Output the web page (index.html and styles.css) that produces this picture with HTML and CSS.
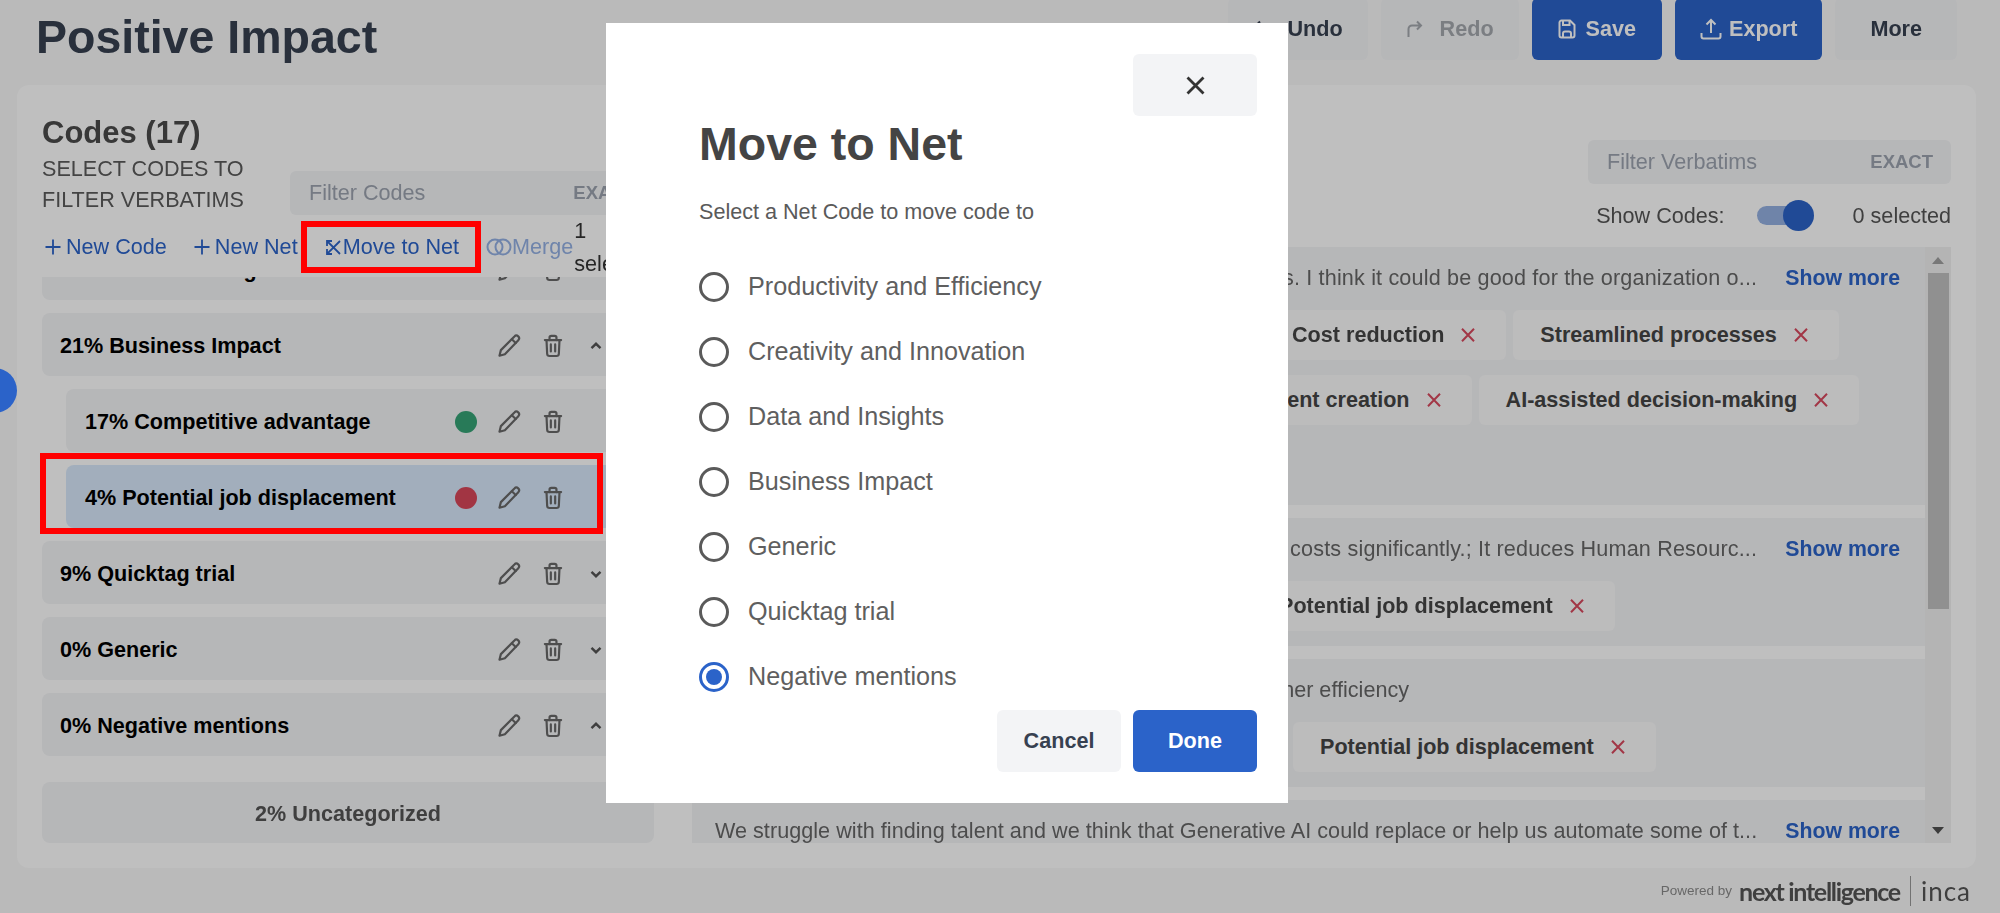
FILE: index.html
```html
<!DOCTYPE html>
<html lang="en">
<head>
<meta charset="utf-8">
<title>Positive Impact</title>
<link rel="stylesheet" href="styles.css">
</head>
<body>
<svg class="defs" aria-hidden="true">
  <symbol id="pencil" viewBox="0 0 24 24"><path d="M17 3.2a2.4 2.4 0 0 1 3.6 3.4L8.2 19.6 3.2 21l1.3-5.2z"/><path d="M14.6 5.800l3.600 3.400"/></symbol>
  <symbol id="trash" viewBox="0 0 24 24"><path d="M4.500 6.500h15"/><path d="M8.800 6.500V4.200A1.600 1.600 0 0 1 10.400 2.600h3.200a1.600 1.600 0 0 1 1.600 1.600v2.300"/><path d="M6 6.500l.6 12.600a2.200 2.200 0 0 0 2.200 2.100h6.400a2.200 2.200 0 0 0 2.200-2.100L18 6.500"/><path d="M10 10.500v6.500M14 10.500v6.500"/></symbol>
  <symbol id="up" viewBox="0 0 12 8"><path d="M1.500 6.200L6 1.800l4.500 4.400"/></symbol>
  <symbol id="down" viewBox="0 0 12 8"><path d="M1.500 1.800L6 6.200l4.500-4.400"/></symbol>
  <symbol id="plus" viewBox="0 0 16 16"><path d="M8 .5v15M.5 8h15"/></symbol>
  <symbol id="x" viewBox="0 0 14 14"><path d="M1 .8l12 12.400M13 .8L1 13.200"/></symbol>
</svg>

<div class="page">
  <header class="topbar">
    <h1 class="title">Positive Impact</h1>
    <div class="tools">
      <button class="btn btn-wide"><svg class="i-hist" viewBox="0 0 16 18"><path d="M14.500 17V9a3.500 3.500 0 0 0-3.500-3.500H2M6 1.500L2 5.500l4 4"/></svg>Undo</button>
      <button class="btn btn-wide btn-off"><svg class="i-hist" viewBox="0 0 16 18"><path d="M1.500 17V9A3.500 3.500 0 0 1 5 5.500h9M10 1.500l4 4-4 4"/></svg>Redo</button>
      <button class="btn btn-pri"><svg class="i-save" viewBox="0 0 18 20"><path d="M1.500 3.500a2 2 0 0 1 2-2h8.500l4.500 4.500v10.500a2 2 0 0 1-2 2h-11a2 2 0 0 1-2-2z"/><path d="M5 1.500v4.500h6.500V1.500"/><path d="M5 18.500v-4a2 2 0 0 1 2-2h4a2 2 0 0 1 2 2v4"/></svg>Save</button>
      <button class="btn btn-pri btn-tight"><svg class="i-export" viewBox="0 0 22 22"><path d="M11 15V2M6.500 6.500L11 2l4.500 4.500"/><path d="M1.500 15v3.500a2 2 0 0 0 2 2h15a2 2 0 0 0 2-2V15"/></svg>Export</button>
      <button class="btn btn-more">More</button>
    </div>
  </header>

  <main class="panel">
    <section class="codes">
      <h2 class="codes-title">Codes (17)</h2>
      <div class="codes-head">
        <p class="codes-hint">SELECT CODES TO FILTER VERBATIMS</p>
        <div class="filter"><span class="filter-ph">Filter Codes</span><span class="filter-mode">EXACT</span></div>
      </div>
      <div class="actions">
        <a class="act"><svg class="i-plus"><use href="#plus"/></svg>New Code</a>
        <a class="act"><svg class="i-plus"><use href="#plus"/></svg>New Net</a>
        <a class="act"><svg class="i-move" viewBox="0 0 17 17"><path d="M2 2l13 13M15 2L2 15M2 7V2h5M2 10v5h5"/></svg>Move to Net</a>
        <div class="act-end">
          <a class="act act-off"><svg class="i-merge" viewBox="0 0 26 18"><circle cx="9" cy="9" r="7.500"/><circle cx="17" cy="9" r="7.500"/></svg>Merge</a>
          <span class="sel-count">1 selected</span>
        </div>
      </div>

      <div class="code-list">
        <div class="code code-first"><span class="code-name">17% Data and Insights</span><span class="cell"></span><span class="cell"><svg class="i-row"><use href="#pencil"/></svg></span><span class="cell"><svg class="i-row"><use href="#trash"/></svg></span><span class="cell"><svg class="i-chev"><use href="#down"/></svg></span></div>
        <div class="code"><span class="code-name">21% Business Impact</span><span class="cell"></span><span class="cell"><svg class="i-row"><use href="#pencil"/></svg></span><span class="cell"><svg class="i-row"><use href="#trash"/></svg></span><span class="cell"><svg class="i-chev"><use href="#up"/></svg></span></div>
        <div class="code code-sub"><span class="code-name">17% Competitive advantage</span><span class="cell"><i class="dot dot-pos"></i></span><span class="cell"><svg class="i-row"><use href="#pencil"/></svg></span><span class="cell"><svg class="i-row"><use href="#trash"/></svg></span><span class="cell"></span></div>
        <div class="code code-sub code-on"><span class="code-name">4% Potential job displacement</span><span class="cell"><i class="dot dot-neg"></i></span><span class="cell"><svg class="i-row"><use href="#pencil"/></svg></span><span class="cell"><svg class="i-row"><use href="#trash"/></svg></span><span class="cell"></span></div>
        <div class="code"><span class="code-name">9% Quicktag trial</span><span class="cell"></span><span class="cell"><svg class="i-row"><use href="#pencil"/></svg></span><span class="cell"><svg class="i-row"><use href="#trash"/></svg></span><span class="cell"><svg class="i-chev"><use href="#down"/></svg></span></div>
        <div class="code"><span class="code-name">0% Generic</span><span class="cell"></span><span class="cell"><svg class="i-row"><use href="#pencil"/></svg></span><span class="cell"><svg class="i-row"><use href="#trash"/></svg></span><span class="cell"><svg class="i-chev"><use href="#down"/></svg></span></div>
        <div class="code"><span class="code-name">0% Negative mentions</span><span class="cell"></span><span class="cell"><svg class="i-row"><use href="#pencil"/></svg></span><span class="cell"><svg class="i-row"><use href="#trash"/></svg></span><span class="cell"><svg class="i-chev"><use href="#up"/></svg></span></div>
      </div>
      <div class="uncat">2% Uncategorized</div>
    </section>

    <section class="verbatims">
      <div class="filter filter-v"><span class="filter-ph">Filter Verbatims</span><span class="filter-mode">EXACT</span></div>
      <div class="show-row">
        <span class="show-label">Show Codes:</span>
        <span class="toggle"><i class="toggle-track"></i><i class="toggle-thumb"></i></span>
        <span class="show-count">0 selected</span>
      </div>
      <div class="v-wrap">
        <div class="v-list">
          <article class="card card-tall">
            <div class="v-line"><div class="v-text v-text-wide"><span>It can help automate repetitive tasks. I think it could be good for the organization o...</span></div><a class="more">Show more</a></div>
            <div class="chips"><i class="chip-gap gap-a"></i><span class="chip">Cost reduction<svg class="i-x"><use href="#x"/></svg></span><span class="chip">Streamlined processes<svg class="i-x"><use href="#x"/></svg></span></div>
            <div class="chips"><i class="chip-gap gap-b"></i><span class="chip">Content creation<svg class="i-x"><use href="#x"/></svg></span><span class="chip">AI-assisted decision-making<svg class="i-x"><use href="#x"/></svg></span></div>
          </article>
          <article class="card">
            <div class="v-line"><div class="v-text v-text-wide"><span>It could lower its costs significantly.; It reduces Human Resourc...</span></div><a class="more">Show more</a></div>
            <div class="chips"><i class="chip-gap gap-c"></i><span class="chip">Potential job displacement<svg class="i-x"><use href="#x"/></svg></span></div>
          </article>
          <article class="card">
            <div class="v-line"><div class="v-text v-text-short"><span>Fewer staff and higher efficiency</span></div></div>
            <div class="chips"><i class="chip-gap gap-d"></i><span class="chip">Potential job displacement<svg class="i-x"><use href="#x"/></svg></span></div>
          </article>
          <article class="card">
            <div class="v-line"><div class="v-text v-text-long"><span>We struggle with finding talent and we think that Generative AI could replace or help us automate some of t...</span></div><a class="more">Show more</a></div>
          </article>
        </div>
        <div class="scrollbar">
          <span class="sb-btn"><i class="tri-up"></i></span>
          <span class="sb-thumb"></span>
          <span class="sb-btn sb-btn-end"><i class="tri-down"></i></span>
        </div>
      </div>
    </section>
  </main>

  <footer class="foot">
    <span class="foot-by">Powered by</span>
    <span class="foot-brand">next intelligence</span>
    <span class="foot-inca">inca</span>
  </footer>
</div>

<div class="overlay"></div>
<span class="side-dot"></span>
<span class="mark mark-move"></span>
<span class="mark mark-row"></span>

<div class="modal">
  <div class="modal-top"><button class="btn-close"><svg class="i-close" viewBox="0 0 19 19"><path d="M1.500 1.500l16 16M17.500 1.500l-16 16"/></svg></button></div>
  <div class="modal-body">
    <h2 class="modal-title">Move to Net</h2>
    <p class="modal-sub">Select a Net Code to move code to</p>
    <div class="radios">
      <label class="radio"><i class="radio-c"></i>Productivity and Efficiency</label>
      <label class="radio"><i class="radio-c"></i>Creativity and Innovation</label>
      <label class="radio"><i class="radio-c"></i>Data and Insights</label>
      <label class="radio"><i class="radio-c"></i>Business Impact</label>
      <label class="radio"><i class="radio-c"></i>Generic</label>
      <label class="radio"><i class="radio-c"></i>Quicktag trial</label>
      <label class="radio"><i class="radio-c radio-on"></i>Negative mentions</label>
    </div>
  </div>
  <div class="modal-foot">
    <button class="mbtn">Cancel</button>
    <button class="mbtn mbtn-pri">Done</button>
  </div>
</div>
</body>
</html>
```

FILE: styles.css
```css
* { box-sizing: border-box; }
html, body { margin: 0; padding: 0; height: 913px; overflow: hidden; }
body { font-family: "Liberation Sans", Arial, sans-serif; font-size: 21.6px; background: #f9f9f9; color: #333; position: relative; }
button { font: inherit; border: 0; cursor: pointer; }
p, h1, h2 { margin: 0; }
i { display: block; }
.defs { display: none; }

.page { height: 913px; display: flex; flex-direction: column; filter: blur(.35px); }

/* top bar */
.topbar { height: 85px; flex: none; display: flex; justify-content: space-between; align-items: flex-start; padding: 0 43px 0 36px; }
.title { font-size: 46.5px; line-height: 74px; font-weight: 700; color: #374151; }
.tools { display: flex; gap: 13px; margin-top: -2px; }
.btn { height: 62px; display: flex; align-items: center; gap: 17px; padding: 0 25px 0 26px; font-weight: 700; background: #f3f4f6; color: #374151; border-radius: 6px; }
.btn-off { color: #a4a8ae; }
.btn-pri { background: #2b63c9; color: #fff; gap: 10px; padding: 0 26px; }
.btn-tight { gap: 7px; padding: 0 25px; }
.btn-more { padding: 0 35px; color: #374151; }
.i-hist { width: 16px; height: 18px; fill: none; stroke: currentColor; stroke-width: 2; }
.i-save { width: 18px; height: 20px; fill: none; stroke: currentColor; stroke-width: 2; }
.i-export { width: 22px; height: 22px; fill: none; stroke: currentColor; stroke-width: 2; }

/* panel */
.panel { height: 783px; flex: none; margin: 0 24px 0 17px; padding: 31px 25px 25px; background: #fff; border-radius: 12px; display: flex; gap: 38px; }
.codes { width: 612px; flex: none; display: flex; flex-direction: column; }
.codes-title { font-size: 31px; line-height: 34px; font-weight: 700; color: #4b4b4b; }
.codes-head { display: flex; align-items: flex-end; height: 65px; }
.codes-hint { width: 248px; flex: none; line-height: 31px; color: #5b5b5b; }
.filter { height: 44px; flex: 1; display: flex; align-items: center; justify-content: space-between; padding: 0 18px 0 19px; background: #f3f4f6; border-radius: 6px; }
.filter-ph { color: #9ca3af; }
.filter-mode { font-size: 18.500px; font-weight: 700; color: #9ca3af; }

.actions { height: 52px; flex: none; margin-top: 6px; padding-left: 3px; display: flex; align-items: center; gap: 27px; white-space: nowrap; }
.act { display: flex; align-items: center; gap: 5px; color: #2b63c9; }
.act-off { color: #94b1e4; gap: 0; }
.act-end { display: flex; align-items: center; gap: 1px; }
.i-plus { width: 16px; height: 16px; fill: none; stroke: currentColor; stroke-width: 1.800; }
.i-move { width: 17px; height: 17px; fill: none; stroke: currentColor; stroke-width: 1.800; margin-right: -4px; }
.i-merge { width: 26px; height: 18px; fill: none; stroke: currentColor; stroke-width: 2; }
.sel-count { width: 60px; white-space: normal; line-height: 33px; color: #333; }

.code-list { height: 492px; margin-top: 4px; flex: none; overflow: hidden; display: flex; flex-direction: column; gap: 13px; width: 583px; }
.code { height: 63px; flex: none; display: flex; align-items: center; padding: 2px 7px 0 18px; background: #f3f4f6; border-radius: 8px; }
.code-first { margin-top: -40px; }
.code-sub { margin-left: 24px; padding-left: 19px; }
.code-on { background: #d9e9fb; }
.code-name { flex: 1; font-weight: 700; color: #000; white-space: nowrap; }
.cell { width: 43.500px; flex: none; display: flex; justify-content: center; align-items: center; }
.i-row { width: 26px; height: 26px; fill: none; stroke: #686868; stroke-width: 2; stroke-linecap: round; stroke-linejoin: round; }
.i-chev { width: 12px; height: 8px; fill: none; stroke: #555; stroke-width: 2.400; }
.dot { width: 22px; height: 22px; border-radius: 50%; }
.dot-pos { background: #36a376; }
.dot-neg { background: #d9475a; }
.uncat { height: 61px; flex: none; margin-top: 13px; padding-top: 2px; display: flex; align-items: center; justify-content: center; font-weight: 700; color: #555; background: #f3f4f6; border-radius: 8px; }

/* verbatims */
.verbatims { flex: 1; min-width: 0; display: flex; flex-direction: column; padding-top: 24px; }
.filter-v { flex: none; width: 363px; align-self: flex-end; }
.show-row { height: 31px; flex: none; margin-top: 16px; display: flex; align-items: center; justify-content: flex-end; color: #555; }
.toggle { position: relative; width: 57px; height: 31px; margin: 0 39px 0 32px; }
.toggle-track { position: absolute; left: 0; top: 6px; width: 53px; height: 19px; border-radius: 10px; background: #95b1e2; }
.toggle-thumb { position: absolute; right: 0; top: 0; width: 31px; height: 31px; border-radius: 50%; background: #2b63c9; }

.v-wrap { height: 596px; flex: none; margin-top: 16px; display: flex; }
.v-list { flex: 1; min-width: 0; height: 596px; overflow: hidden; display: flex; flex-direction: column; gap: 13px; }
.card { flex: none; padding: 16px 25px 15px 19px; background: #f3f4f6; }
.card-tall { padding-bottom: 80px; }
.v-line { height: 30px; display: flex; align-items: center; gap: 28px; line-height: 30px; }
.v-text { flex: 1; min-width: 0; overflow: hidden; display: flex; justify-content: flex-end; white-space: nowrap; color: #666; }
.v-text span { flex: none; }
.v-text-short { flex: none; width: 698px; }
.v-text-wide { letter-spacing: .16px; }
.v-text-long { letter-spacing: .04px; }
.more { flex: none; font-size: 21.300px; font-weight: 700; color: #2b63c9; }
.chips { height: 50px; margin-top: 15px; display: flex; gap: 7px; }
.v-line + .chips { margin-top: 17px; }
.chip-gap { flex: none; }
.gap-a { width: 547px; }
.gap-b { width: 493px; }
.gap-c { width: 534px; }
.gap-d { width: 575px; }
.chip { display: flex; align-items: center; gap: 17px; padding: 0 31px 0 27px; font-weight: 700; color: #444; background: #fbfbfb; border-radius: 6px; white-space: nowrap; }
.i-x { width: 14px; height: 14px; fill: none; stroke: #d8495e; stroke-width: 2; }

.scrollbar { width: 26px; flex: none; display: flex; flex-direction: column; background: #f1f1f1; }
.sb-btn { height: 26px; flex: none; display: flex; align-items: center; justify-content: center; }
.sb-btn-end { margin-top: auto; }
.sb-thumb { width: 21px; height: 336px; margin-left: 3px; background: #c1c1c1; }
.tri-up { border: 6px solid transparent; border-top: 0; border-bottom: 7px solid #a0a0a0; }
.tri-down { border: 6px solid transparent; border-bottom: 0; border-top: 7px solid #505050; }

/* footer */
.foot { flex: 1; display: flex; align-items: center; justify-content: flex-end; padding: 0 29px 0 0; color: #555; }
.foot-by { font-size: 13.500px; color: #8a8a8a; margin-right: 7px; }
.foot-brand { font-family: Lato, "Liberation Sans", sans-serif; font-size: 25px; font-weight: 700; letter-spacing: -1.300px; padding-right: 10px; border-right: 1px solid #999; line-height: 30px; }
.foot-inca { font-family: Lato, "Liberation Sans", sans-serif; font-size: 26px; padding-left: 10px; line-height: 30px; letter-spacing: 1px; }

/* overlays */
.overlay { position: absolute; inset: 0; background: rgba(0, 0, 0, .25); z-index: 10; }
.side-dot { position: absolute; left: -28px; top: 368px; width: 45px; height: 45px; border-radius: 50%; background: #2b63c9; z-index: 15; }
.mark { position: absolute; border: 6px solid #f00; z-index: 15; }
.mark-move { left: 301px; top: 221px; width: 180px; height: 52px; }
.mark-row { left: 40px; top: 453px; width: 563px; height: 81px; }

/* modal */
.modal { position: absolute; left: 606px; top: 23px; width: 682px; height: 780px; background: #fff; z-index: 20; padding: 31px; color: #444; display: flex; flex-direction: column; }
.modal-top { display: flex; justify-content: flex-end; }
.btn-close { width: 124px; height: 62px; background: #f3f4f6; border-radius: 6px; display: flex; align-items: center; justify-content: center; }
.i-close { width: 19px; height: 19px; fill: none; stroke: #333; stroke-width: 2.800; }
.modal-body { padding-left: 62px; }
.modal-title { font-size: 46.5px; line-height: 56px; font-weight: 700; color: #444; }
.modal-sub { margin-top: 25px; line-height: 30px; color: #5a5a5a; }
.radios { margin-top: 27px; display: flex; flex-direction: column; }
.radio { height: 65px; display: flex; align-items: center; gap: 19px; font-size: 25.200px; color: #5f5f5f; }
.radio-c { width: 30px; height: 30px; flex: none; border: 3px solid #5a5a5a; border-radius: 50%; display: flex; align-items: center; justify-content: center; }
.radio-on { border-color: #2b63c9; }
.radio-on::after { content: ""; width: 16px; height: 16px; border-radius: 50%; background: #2b63c9; }
.modal-foot { margin-top: 1px; display: flex; justify-content: flex-end; gap: 12px; }
.mbtn { width: 124px; height: 62px; background: #f3f4f6; color: #374151; font-weight: 700; border-radius: 6px; }
.mbtn-pri { background: #2b63c9; color: #fff; }
```
